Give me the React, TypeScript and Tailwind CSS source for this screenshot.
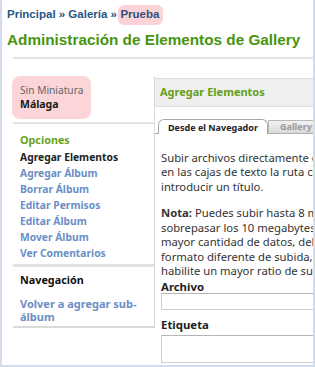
export default function App() {
  const link = "text-[10.3px] leading-[16px] font-bold text-[#6b8ec6]";
  return (
    <div className="w-[315px] h-[367px] overflow-hidden bg-white border-x-2 border-b-2 border-[#d2dcea] font-['Noto_Sans',sans-serif]">
      {/* breadcrumb */}
      <div className="mt-[5px] pl-[5px] h-[20px] flex items-center font-['Liberation_Sans',Arial,sans-serif] font-bold text-[11.5px] text-[#285683] whitespace-nowrap">
        <span>Principal » Galería »</span>
        <span className="ml-[1px] h-[20px] flex items-center rounded-[6px] bg-[#fbd3d6] pl-[2.5px] pr-[4px] text-[#34507c]">Prueba</span>
      </div>
      {/* title */}
      <div className="mt-[5px] pl-[5px] font-['Liberation_Sans',Arial,sans-serif] font-bold text-[15.3px] leading-[19px] text-[#47950e] whitespace-nowrap">
        Administración de Elementos de Gallery
      </div>
      <div className="mt-[8px] ml-[11px] h-[2px] bg-[#e2e2e2]" />

      <div className="mt-[17px] flex items-start">
        {/* sidebar */}
        <aside className="ml-[11px] w-[142px] shrink-0 border-r border-b-2 border-[#dadada]">
          <div className="-ml-[1px] w-[79px] rounded-[8px] bg-[#fbd5d8] pl-[8px] pt-[7px] pb-[8px]">
            <div className="text-[10.2px] leading-[14px] text-[#666]">Sin Miniatura</div>
            <div className="text-[10.5px] leading-[14px] font-bold text-[#1a1a1a]">Málaga</div>
          </div>
          <div className="mt-[3px] h-[2px] bg-[#e4e4e4]" />
          <div className="pl-[7px]">
            <div className="mt-[8px] text-[10.8px] leading-[16px] font-bold text-[#6aa31e]">Opciones</div>
            <div className="mt-[1px] text-[10.3px] leading-[16px] font-bold text-[#222]">Agregar Elementos</div>
            <div className={link}>Agregar Álbum</div>
            <div className={link}>Borrar Álbum</div>
            <div className={link}>Editar Permisos</div>
            <div className={link}>Editar Álbum</div>
            <div className={link}>Mover Álbum</div>
            <div className={link}>Ver Comentarios</div>
          </div>
          <div className="mt-[3px] h-[3px] bg-[#e2e2e2]" />
          <div className="pl-[7px] mt-[5px] text-[10.8px] leading-[16px] font-bold text-[#111]">Navegación</div>
          <div className="pl-[7px] mt-[9px] pb-[3px] text-[11px] leading-[13px] font-bold text-[#6b8ec6]">
            <div>Volver a agregar sub-</div>
            <div>álbum</div>
          </div>
        </aside>

        {/* content */}
        <div className="w-[300px] shrink-0">
          <div className="mt-[2px] h-[29px] bg-[#efefef] border-y border-[#dddddd] flex items-center pl-[5px] text-[11px] font-bold text-[#64a019] whitespace-nowrap">
            Agregar Elementos
          </div>
          <div className="mt-[12px] h-[15px] flex items-end border-b border-[#b0b0b0] pl-[3px]">
            <div className="relative z-10 -mb-[1px] h-[15px] w-[110px] flex items-center justify-center pt-[2px] bg-white border-x border-t border-[#a8a8a8] rounded-t-[6px] text-[9px] font-bold text-[#222] whitespace-nowrap">
              Desde el Navegador
            </div>
            <div className="h-[13px] flex items-center pl-[11px] pr-[10px] bg-gradient-to-b from-[#f2f2f2] to-[#d9d9d9] border-x border-t border-[#b8b8b8] rounded-tr-[6px] text-[9px] font-bold text-[#999] whitespace-nowrap">
              Gallery Remoto
            </div>
          </div>
          <div className="pl-[6px] text-[11.25px] leading-[14.5px] text-[#333] whitespace-nowrap">
            <div className="mt-[16.75px]">
              <div>Subir archivos directamente desde tu ordenador. Introduce</div>
              <div>en las cajas de texto la ruta completa al archivo y, si quieres,</div>
              <div>introducir un título.</div>
            </div>
            <div className="mt-[12px]">
              <div>
                <span className="font-bold">Nota:</span> Puedes subir hasta 8 megabytes por archivo, pero sin
              </div>
              <div>sobrepasar los 10 megabytes en total. Si necesitas subir una</div>
              <div>mayor cantidad de datos, debes intentar usar un</div>
              <div>formato diferente de subida, o pedir al administrador que</div>
              <div>habilite un mayor ratio de subida.</div>
            </div>
            <div className="mt-[2px] text-[11.4px] leading-[12px] font-bold text-[#222]">Archivo</div>
            <div className="h-[17px] w-full border border-[#cfcfcf] border-t-[#b5b5b5] bg-white" />
            <div className="mt-[9.5px] text-[11.4px] leading-[12px] font-bold text-[#222]">Etiqueta</div>
            <div className="mt-[4px] h-[28px] w-full border border-[#cfcfcf] border-t-[#b5b5b5] bg-white" />
          </div>
        </div>
      </div>
    </div>
  );
}
